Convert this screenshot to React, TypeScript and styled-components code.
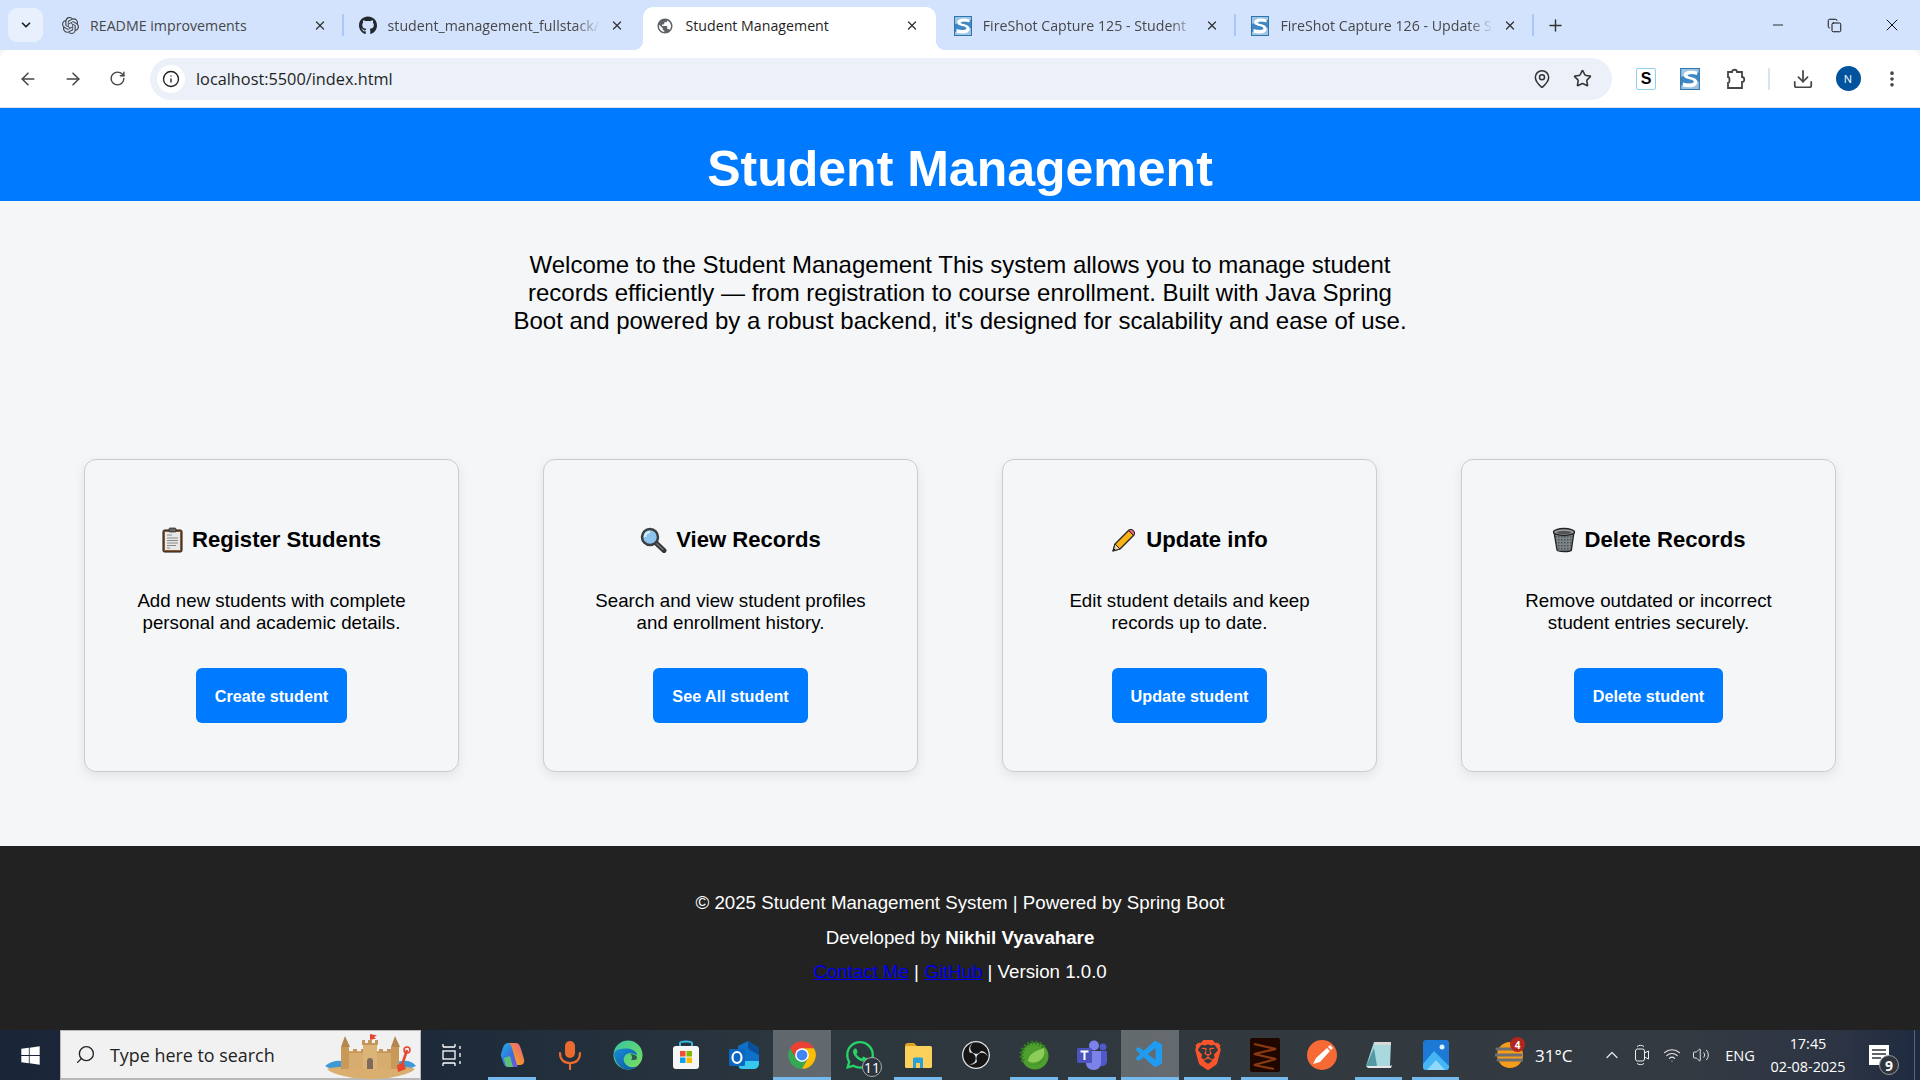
import React from "react";
import styled, { createGlobalStyle } from "styled-components";
import {
  ArrowLeft,
  ArrowRight,
  ChevronDown,
  ChevronUp,
  Copy,
  Download,
  EllipsisVertical,
  Info,
  MapPin,
  Minus,
  Plus,
  RotateCw,
  Search,
  Star,
  Volume2,
  Wifi,
  X,
} from "lucide-react";
import { FaGithub, FaWhatsapp, FaWindows } from "react-icons/fa";
import { MdPublic } from "react-icons/md";
import { SiBrave, SiObsstudio, SiOpenai } from "react-icons/si";
import { VscVscode } from "react-icons/vsc";

const GlobalStyle = createGlobalStyle`
  html, body {
    margin: 0;
    padding: 0;
    background: #f4f6f8;
    font-family: "Liberation Sans", Arial, sans-serif;
  }
  * { box-sizing: border-box; }
`;

const Screen = styled.div`
  width: 1920px;
  height: 1080px;
  display: flex;
  flex-direction: column;
  overflow: hidden;
`;

/* browser chrome */
const TabStrip = styled.div`
  height: 50px;
  flex: none;
  display: flex;
  background: #d3e3fd;
  padding-top: 7px;
  font-family: "Open Sans", sans-serif;
`;

const TabMenu = styled.div`
  width: 35px;
  height: 34px;
  margin: 1px 3px 0 8px;
  flex: none;
  border-radius: 9px;
  background: #e9f0fd;
  display: flex;
  align-items: center;
  justify-content: center;
  color: #1f1f1f;
`;

const Tab = styled.div<{ $active?: boolean }>`
  position: relative;
  flex: none;
  width: ${(p) => (p.$active ? "293px" : "297.6px")};
  margin: ${(p) => (p.$active ? "0 2.3px" : "0")};
  display: flex;
  align-items: center;
  height: 43px;
  padding: 0 17px 6px ${(p) => (p.$active ? "13px" : "15px")};
  background: ${(p) => (p.$active ? "#fff" : "transparent")};
  border-radius: 10px 10px 0 0;
  color: ${(p) => (p.$active ? "#1f1f1f" : "#474747")};
  ${(p) =>
    p.$active
      ? `
    &::before, &::after {
      content: "";
      position: absolute;
      bottom: 0;
      width: 10px;
      height: 10px;
    }
    &::before { left: -10px; background: radial-gradient(circle at 0 0, transparent 10px, #fff 10.5px); }
    &::after { right: -10px; background: radial-gradient(circle at 100% 0, transparent 10px, #fff 10.5px); }
  `
      : ""}
`;

const TabSeparator = styled.span`
  position: absolute;
  right: 0;
  top: 7px;
  width: 2px;
  height: 22px;
  background: #a8c7fa;
`;

const Favicon = styled.span`
  width: 18px;
  height: 18px;
  flex: none;
  display: flex;
  align-items: center;
  justify-content: center;
  color: #444;
  margin-right: 11px;
`;

const TabTitle = styled.span<{ $fade?: boolean }>`
  flex: 1;
  min-width: 0;
  font-size: 14.2px;
  white-space: nowrap;
  overflow: hidden;
  margin-right: ${(p) => (p.$fade ? "9px" : "0")};
  ${(p) =>
    p.$fade
      ? "mask-image: linear-gradient(90deg, #000 88%, transparent 100%);"
      : ""}
`;

const TabClose = styled.span`
  flex: none;
  width: 14px;
  display: flex;
  justify-content: center;
  color: #333;
`;

const NewTab = styled.div`
  width: 42px;
  height: 36px;
  display: flex;
  align-items: center;
  justify-content: center;
  color: #333;
  margin-left: 1px;
`;

const WindowControls = styled.div`
  margin-left: auto;
  display: flex;
  margin-top: -7px;
  color: #111;
`;

const WindowButton = styled.div`
  width: 57px;
  height: 50px;
  display: flex;
  align-items: center;
  justify-content: center;
`;

const Toolbar = styled.div`
  height: 58px;
  flex: none;
  background: #fff;
  border-radius: 10px 10px 0 0;
  border-bottom: 1px solid #e0e2e6;
  display: flex;
  align-items: center;
  padding: 0 0 0 5px;
`;

const NavButton = styled.div`
  width: 45px;
  display: flex;
  justify-content: center;
  color: #444746;
`;

const AddressBar = styled.div`
  flex: none;
  width: 1462px;
  height: 42px;
  margin-left: 10px;
  border-radius: 21px;
  background: #ebf0f9;
  display: flex;
  align-items: center;
  padding: 0 20px 0 7px;
  color: #1f1f1f;
`;

const InfoBadge = styled.div`
  width: 28px;
  height: 28px;
  border-radius: 50%;
  background: #fff;
  display: flex;
  align-items: center;
  justify-content: center;
  margin-right: 11px;
`;

const Url = styled.span`
  font-family: "Open Sans", sans-serif;
  font-size: 16.3px;
  flex: 1;
`;

const BarIcons = styled.div`
  display: flex;
  align-items: center;
  gap: 21px;
  color: #333;
`;

const ExtensionTray = styled.div`
  display: flex;
  align-items: center;
  margin-left: 21px;
  color: #444746;
`;

const TraySlot = styled.div<{ $w: number }>`
  width: ${(p) => p.$w}px;
  flex: none;
  display: flex;
  align-items: center;
  justify-content: center;
`;

const TrayDivider = styled.span`
  width: 2px;
  height: 22px;
  background: #dbe3f0;
  margin: 0 13px 0 17px;
`;

const TextExtension = styled.div`
  width: 20px;
  height: 22px;
  border: 1px solid #8fd0f5;
  border-radius: 2px;
  background: #fff;
  color: #000;
  font: 700 16px "Liberation Sans", sans-serif;
  display: flex;
  align-items: center;
  justify-content: center;
`;

const Avatar = styled.div`
  width: 25px;
  height: 25px;
  border-radius: 50%;
  background: #00539c;
  color: #fff;
  font: 11px "Open Sans", sans-serif;
  display: flex;
  align-items: center;
  justify-content: center;
`;

/* page */
const Header = styled.header`
  height: 93px;
  flex: none;
  background: #007bff;
  color: #fff;
  text-align: center;
  padding-top: 32px;
`;

const Title = styled.h1`
  margin: 0;
  font-size: 50px;
  line-height: 58px;
  font-weight: 700;
`;

const Main = styled.main`
  flex: 1;
  display: flex;
  flex-direction: column;
  align-items: center;
  background: #f4f6f8;
  padding-top: 50px;
`;

const Intro = styled.p`
  margin: 0;
  width: 900px;
  text-align: center;
  font-size: 24px;
  line-height: 28px;
  color: #000;
`;

const CardGrid = styled.section`
  display: grid;
  grid-template-columns: repeat(4, 375px);
  gap: 84px;
  margin-top: 124px;
`;

const Card = styled.article`
  height: 313px;
  background: #f4f6f8;
  border: 1px solid #ccc;
  border-radius: 12px;
  box-shadow: 0 4px 12px rgba(0, 0, 0, 0.08);
  display: flex;
  flex-direction: column;
  align-items: center;
  padding-top: 66px;
`;

const CardTitle = styled.h3`
  margin: 0;
  height: 28px;
  display: flex;
  align-items: center;
  gap: 9px;
  font-size: 22.1px;
  line-height: 28px;
  font-weight: 700;
  color: #000;
`;

const CardText = styled.p`
  margin: 36px 0 0;
  width: 290px;
  text-align: center;
  font-size: 18.72px;
  line-height: 22px;
  color: #000;
`;

const CardButton = styled.button`
  margin-top: 34px;
  height: 55px;
  padding: 1px 19px 0;
  border: none;
  border-radius: 6px;
  background: #007bff;
  color: #fff;
  font-family: "Liberation Sans", Arial, sans-serif;
  font-size: 16.2px;
  font-weight: 700;
`;

const Footer = styled.footer`
  height: 184px;
  flex: none;
  background: #222;
  color: #fff;
  text-align: center;
  padding-top: 40px;
  font-size: 18.72px;
  line-height: 34.5px;
`;

const FooterLine = styled.div``;

const FooterLink = styled.a`
  color: #0000ee;
  text-decoration: underline;
`;

/* taskbar */
const Taskbar = styled.div`
  height: 50px;
  flex: none;
  display: flex;
  color: #fff;
  background: linear-gradient(
    90deg,
    #1a2638 0,
    #1c2a3a 22%,
    #2c373e 42%,
    #31393e 65%,
    #343a42 88%,
    #2c3444 96%,
    #1d2a3f 100%
  );
`;

const StartButton = styled.div`
  width: 60px;
  flex: none;
  display: flex;
  align-items: center;
  justify-content: center;
`;

const SearchBox = styled.div`
  width: 361px;
  height: 50px;
  flex: none;
  display: flex;
  align-items: center;
  background: #f1f1f1;
  border: 1px solid #b8b8b8;
  border-bottom-width: 2px;
  padding-left: 14px;
  color: #222;
  font-family: "Open Sans", sans-serif;
  font-size: 17.9px;
  position: relative;
`;

const SearchText = styled.span`
  margin-left: 14px;
`;

const SearchArt = styled.span`
  position: absolute;
  right: 3px;
  top: 2px;
  display: flex;
`;

const TaskSlot = styled.div<{ $w?: number; $active?: boolean; $running?: boolean }>`
  position: relative;
  width: ${(p) => p.$w ?? 58}px;
  flex: none;
  display: flex;
  align-items: center;
  justify-content: center;
  background: ${(p) => (p.$active ? "rgba(255,255,255,0.25)" : "transparent")};
  ${(p) =>
    p.$running
      ? `
    &::after {
      content: "";
      position: absolute;
      bottom: 0;
      height: 3px;
      left: ${p.$active ? 0 : 5}px;
      right: ${p.$active ? 0 : 5}px;
      background: #76b9ed;
    }
  `
      : ""}
`;

const CountBadge = styled.span`
  position: absolute;
  right: 7px;
  bottom: 3px;
  width: 20px;
  height: 20px;
  border-radius: 50%;
  border: 1px solid #aaa;
  background: #2c353b;
  color: #fff;
  font: 14px "Open Sans", sans-serif;
  display: flex;
  align-items: center;
  justify-content: center;
`;

const SystemTray = styled.div`
  display: flex;
  align-items: center;
  margin-left: 31px;
  font-family: "Open Sans", sans-serif;
`;

const Weather = styled.span`
  position: relative;
  display: flex;
  margin-right: 12px;
`;

const WeatherBadge = styled.span`
  position: absolute;
  right: -2px;
  top: -3px;
  width: 15px;
  height: 15px;
  border-radius: 50%;
  background: #b3261e;
  font: 700 10px "Open Sans", sans-serif;
  display: flex;
  align-items: center;
  justify-content: center;
`;

const Temperature = styled.span`
  font-size: 17px;
  width: 62px;
`;

const TrayIcon = styled.span<{ $w: number }>`
  width: ${(p) => p.$w}px;
  display: flex;
  justify-content: center;
  color: #e6e6e6;
`;

const Lang = styled.span`
  font-size: 14.6px;
  width: 50px;
  text-align: center;
`;

const Clock = styled.div`
  width: 86px;
  text-align: center;
  font-size: 14.4px;
  line-height: 23px;
`;

const Notification = styled.div`
  position: relative;
  width: 36px;
  margin-left: 10px;
  display: flex;
  justify-content: center;
`;

const NotificationCount = styled.span`
  position: absolute;
  left: 18px;
  top: 10px;
  width: 20px;
  height: 20px;
  border-radius: 50%;
  border: 1px solid #999;
  background: #2f353d;
  font: 700 14px "Open Sans", sans-serif;
  display: flex;
  align-items: center;
  justify-content: center;
`;

const ShowDesktop = styled.span`
  width: 1px;
  height: 50px;
  margin-left: 17px;
  background: #5a6270;
`;

const FireShotIcon = ({ size = 18 }: { size?: number }) => (
  <svg width={size} height={size + 2} viewBox="0 0 18 20">
    <rect x="0.5" y="0.5" width="17" height="19" fill="#3f88c5" stroke="#2f74ad" />
    <path d="M1 1h16v3L1 8zM17 12v7H1v-3z" fill="#9cc4e4" />
    <path
      d="M15.500 3.500C11 2 3.500 2 3.200 6.500 3 10.500 12.500 9.500 12.500 12.500c0 2-5.500 2-10 .6v3.700c5.500 1.400 13.200 1.400 13.200-4.200 0-4.600-9-4-9-6 0-1.600 4.800-1.200 8.800-.2z"
      fill="#fff"
    />
  </svg>
);

const ClipboardEmoji = () => (
  <svg width="21" height="26" viewBox="0 0 21 26">
    <rect x="1" y="3" width="19" height="22" rx="1.500" fill="#8a5a34" stroke="#111" />
    <rect x="3" y="5" width="15" height="18" fill="#e8e8e8" />
    <rect x="7" y="1" width="7" height="4" rx="1" fill="#666" stroke="#222" strokeWidth=".7" />
    <path d="M5 8h5M5 11h11M5 13.500h11M5 16h11M5 18.500h9M5 21h3" stroke="#888" strokeWidth="1.200" />
  </svg>
);

const MagnifierEmoji = () => (
  <svg width="27" height="26" viewBox="0 0 27 26">
    <path d="M15 15l9 8.500" stroke="#333" strokeWidth="5" strokeLinecap="round" />
    <path d="M16 16l7 6.500" stroke="#777" strokeWidth="1.500" strokeLinecap="round" />
    <circle cx="10" cy="10" r="8" fill="#8cc4ee" stroke="#3a3f44" strokeWidth="2.500" />
    <path d="M5 10c0-3 2-5 5-5" stroke="#d8eefb" strokeWidth="2.500" fill="none" />
  </svg>
);

const PencilEmoji = () => (
  <svg width="26" height="26" viewBox="0 0 26 26">
    <path d="M2 24l2-7L18 3l5 5L9 22z" fill="#f9b314" stroke="#222" strokeWidth="1.300" strokeLinejoin="round" />
    <path d="M17.500 3.500a3 3 0 0 1 5 5z" fill="#e8607a" stroke="#222" strokeWidth="1" />
    <path d="M2 24l2-7 5 5z" fill="#e9d3b0" stroke="#222" strokeWidth="1" />
    <path d="M2 24l.8-3 2.200 2.200z" fill="#222" />
  </svg>
);

const TrashEmoji = () => (
  <svg width="24" height="26" viewBox="0 0 24 26">
    <defs>
      <pattern id="mesh" width="3" height="3" patternUnits="userSpaceOnUse">
        <rect width="3" height="3" fill="#7c8487" />
        <rect width="1.500" height="1.500" fill="#4e5558" />
      </pattern>
    </defs>
    <path d="M2 5l3 18c.3 2 14 2 14.400 0L22 5z" fill="url(#mesh)" stroke="#222" strokeWidth="1.300" />
    <ellipse cx="12" cy="5" rx="10.500" ry="3.500" fill="#9aa3a6" stroke="#222" strokeWidth="1.300" />
    <ellipse cx="12" cy="5.500" rx="7.500" ry="1.800" fill="#555" />
  </svg>
);

const CastleArt = () => (
  <svg width="92" height="47" viewBox="0 0 92 47">
    <path d="M0 33c8-6 14-6 20-4h52c8-2 14-2 19 4-8 4-18 5-24 4H24c-8 1-18 0-24-4z" fill="#3d9ad6" />
    <path d="M2 36c10-4 76-5 88 0-6 6-26 10-44 10S8 42 2 36z" fill="#d9ae6e" />
    <path d="M20 18h54v18H20z" fill="#d7ad6f" />
    <path d="M20 16h4v3h4v-3h4v3h4v-3h4v3h14v-3h4v3h4v-3h4v3h4v-3h4v4H20z" fill="#c4965b" />
    <path d="M16 14h8v22h-8zM66 14h8v22h-8z" fill="#c9995a" />
    <path d="M20 3l5 11h-9zM70 3l5 11h-9z" fill="#b5874e" />
    <path d="M38 10h14v26H38z" fill="#dcb478" />
    <path d="M37 7h3v3h3V7h4v3h3V7h3v5H37z" fill="#c4965b" />
    <path d="M42 36v-8c0-4 6-4 6 0v8z" fill="#7d6a5c" />
    <path d="M45 7V1l7 1.500-3 1.500 2 1.500z" fill="#e8432c" />
    <path d="M82 17l-5 15" stroke="#e8432c" strokeWidth="2.500" />
    <path d="M72 32l7-2 2 6-8 3z" fill="#e8432c" />
    <circle cx="82" cy="17" r="3" fill="none" stroke="#e8432c" strokeWidth="1.500" />
  </svg>
);

const TaskViewIcon = () => (
  <svg width="20" height="26" viewBox="0 0 20 26" fill="none" stroke="#fff" strokeWidth="1.300">
    <path d="M1 5h12M1 21h12M1 2v3M13 2v3M1 21v3M13 21v3" />
    <rect x="1" y="9" width="12" height="8" />
    <path d="M18 4v3M18 11v4M18 19v3" />
  </svg>
);

const CopilotIcon = () => (
  <svg width="28" height="28" viewBox="0 0 28 28">
    <defs>
      <linearGradient id="cpA" x1="0" y1="0" x2="1" y2="1">
        <stop offset="0" stopColor="#19b4e6" />
        <stop offset=".5" stopColor="#3b6fe0" />
        <stop offset="1" stopColor="#7a4fd8" />
      </linearGradient>
      <linearGradient id="cpB" x1="0" y1="1" x2="1" y2="0">
        <stop offset="0" stopColor="#f7c734" />
        <stop offset=".5" stopColor="#f08a3c" />
        <stop offset="1" stopColor="#e85aa0" />
      </linearGradient>
    </defs>
    <path d="M9 2h9c3 0 4 3 5 6l3 10c1 4-1 6-4 6h-4L12 8c-1-3-2-4-3-6z" fill="url(#cpB)" />
    <path d="M4 10c1-5 3-8 6-8 2 0 3 2 4 5l5 17c.5 2 1 2 3 2H10c-3 0-4-2-5-5L3 15c-.5-2 .5-3 1-5z" fill="url(#cpA)" />
    <path d="M6 17l6-2 3 11h-5c-2 0-3-2-4-9z" fill="#5fd069" opacity=".85" />
  </svg>
);

const MicIcon = () => (
  <svg width="24" height="30" viewBox="0 0 24 30" fill="none">
    <rect x="7" y="1" width="10" height="17" rx="5" fill="#ea6a2f" />
    <path d="M2 13c0 7 4 10 10 10s10-3 10-10M12 23v6" stroke="#ea6a2f" strokeWidth="2.200" strokeLinecap="round" />
  </svg>
);

const EdgeIcon = () => (
  <svg width="30" height="30" viewBox="0 0 30 30">
    <defs>
      <linearGradient id="edA" x1="0" y1="0" x2="1" y2="1">
        <stop offset="0" stopColor="#36c6a0" />
        <stop offset="1" stopColor="#7adf5f" />
      </linearGradient>
      <linearGradient id="edB" x1="0" y1="0" x2="1" y2="1">
        <stop offset="0" stopColor="#1b8ad6" />
        <stop offset="1" stopColor="#0c59a4" />
      </linearGradient>
    </defs>
    <circle cx="15" cy="15" r="14.500" fill="url(#edA)" />
    <path d="M1 14C2 24 9 30 16 29.500c3 0 6-1 8-3-5 2-11 0-13-5-1-4 1-7 4-8 4-1 8 .5 9 2 .5-3-4-7-10-7S2 9 1 14z" fill="url(#edB)" />
    <path d="M17 14c3 0 6 1 7 3 .5 2-1 3-3 3h-3c2-2 1-5-1-6z" fill="#1c2a3a" opacity=".7" />
  </svg>
);

const StoreIcon = () => (
  <svg width="28" height="30" viewBox="0 0 28 30">
    <path d="M8 6V3c0-2 12-2 12 0v3" fill="none" stroke="#34b6e8" strokeWidth="2" />
    <rect x="1" y="6" width="26" height="23" rx="3" fill="#f6f6f6" />
    <rect x="8" y="11" width="5.500" height="5.500" fill="#f05033" />
    <rect x="14.500" y="11" width="5.500" height="5.500" fill="#7fba00" />
    <rect x="8" y="17.500" width="5.500" height="5.500" fill="#0a9fe8" />
    <rect x="14.500" y="17.500" width="5.500" height="5.500" fill="#fdb900" />
  </svg>
);

const OutlookIcon = () => (
  <svg width="32" height="30" viewBox="0 0 32 30">
    <path d="M10 6l10-5 11 7v14l-20 7z" fill="#0f70c8" />
    <path d="M20 1l11 7v7l-11-6z" fill="#0a4f99" />
    <path d="M10 21h21v3c0 3-3 5-5 5H14c-2 0-4-3-4-5z" fill="#37c8ee" />
    <rect x="1" y="9" width="16" height="17" rx="1.500" fill="#0b66c0" />
    <ellipse cx="9" cy="17.500" rx="4.500" ry="5.500" fill="none" stroke="#fff" strokeWidth="2.200" />
  </svg>
);

const ChromeIcon = () => (
  <svg width="30" height="30" viewBox="0 0 24 24">
    <path d="M2.470 6.500A11 11 0 0 1 21.530 6.500H12L7.240 14.750z" fill="#ea4335" />
    <path d="M2.470 6.500A11 11 0 0 0 12 23l4.760-8.250H7.240z" fill="#34a853" />
    <path d="M21.530 6.500A11 11 0 0 1 12 23l4.760-8.250L12 6.500z" fill="#fbbc04" />
    <circle cx="12" cy="12" r="5.500" fill="#fff" />
    <circle cx="12" cy="12" r="4.300" fill="#4285f4" />
  </svg>
);

const FolderIcon = () => (
  <svg width="28" height="27" viewBox="0 0 28 27">
    <path d="M1 4c0-2 1-3 3-3h6l3 3h6v6H1z" fill="#d9a520" />
    <rect x="1" y="4" width="27" height="22" rx="1.500" fill="#fbd15c" />
    <path d="M9 26V17c0-1 1-1.500 1.500-1.500h7c1 0 1.500.5 1.500 1.500v9h-3v-5h-4v5z" fill="#2b9fd8" />
  </svg>
);

const ObsBadge = styled.span`
  display: flex;
  border-radius: 50%;
  background: #151515;
`;

const ObsIcon = () => (
  <ObsBadge>
    <SiObsstudio size={28} color="#e4e4e4" />
  </ObsBadge>
);

const SpringIcon = () => (
  <svg width="30" height="30" viewBox="0 0 30 30">
    <circle cx="16" cy="16" r="13.500" fill="#4f9f2f" />
    <circle
      cx="15"
      cy="15"
      r="12.500"
      fill="none"
      stroke="#2f7d1f"
      strokeWidth="4"
      pathLength="100"
      strokeDasharray="2.500 2.500 2.500 2.500 2.500 2.500 2.500 2.500 2.500 2.500 2.500 2.500 2.500 2.500 2.500 2.500 2.500 2.500 2.500 2.500 0 100"
      transform="rotate(150 15 15)"
    />
    <path d="M25 8c2 8-3 14-10 14.500-3 .2-5-.5-6-2C10 14 16 11 25 8z" fill="#8ccc58" />
    <path d="M8 24c4 2 10 1 14-2 2-2 3-3 4-5-2 5-7 8-12 8-2 0-4 0-6-1z" fill="#1f6b1a" />
  </svg>
);

const TeamsIcon = () => (
  <svg width="32" height="30" viewBox="0 0 32 30">
    <circle cx="18" cy="5.500" r="5" fill="#7b83eb" />
    <circle cx="27" cy="7" r="3.500" fill="#5059c9" />
    <path d="M22 11h9v10c0 3-2 5-5 5h-4z" fill="#5059c9" />
    <path d="M10 11h15v12c0 4-3 7-7 7-5 0-8-3-8-7z" fill="#7b83eb" />
    <rect x="1" y="8" width="15" height="15" rx="1.500" fill="#4b53bc" />
    <path d="M4.500 11.500h8M8.500 11.500v8.500" stroke="#fff" strokeWidth="2" />
  </svg>
);

const CoilIcon = () => (
  <svg width="30" height="34" viewBox="0 0 30 34">
    <rect width="30" height="34" rx="2" fill="#1f0700" />
    <path d="M4 6l22 5L4 16l22 5L4 27l20 4" fill="none" stroke="#8a3a10" strokeWidth="2.200" />
  </svg>
);

const PostmanIcon = () => (
  <svg width="30" height="30" viewBox="0 0 30 30">
    <circle cx="15" cy="15" r="15" fill="#f76935" />
    <path d="M6 24l3-6L20 8l3 3-10 11z" fill="#fff" />
    <path d="M21 7l2-2 3 3-2 2z" fill="#fff" />
  </svg>
);

const NotepadIcon = () => (
  <svg width="28" height="30" viewBox="0 0 28 30">
    <path d="M9 2h17l-1 24H1z" fill="#a9d8df" />
    <path d="M10 2h16v3H9z" fill="#d8d8d8" />
    <path d="M1 26h24l2-1-1 3H3z" fill="#e8e8e8" />
    <path d="M1 26L9 8l3 18z" fill="#2f7d89" opacity=".7" />
  </svg>
);

const PhotosIcon = () => (
  <svg width="26" height="30" viewBox="0 0 26 30">
    <rect width="26" height="30" rx="3" fill="#1c7ad6" />
    <circle cx="19" cy="7" r="2.500" fill="#dff1ff" />
    <path d="M0 24L11 11l15 15v1a3 3 0 0 1-3 3H3a3 3 0 0 1-3-3z" fill="#46b5f3" />
    <path d="M4 30l9-10 9 10z" fill="#8ed8fb" />
  </svg>
);

const WeatherIcon = () => (
  <svg width="28" height="30" viewBox="0 0 28 30">
    <circle cx="15" cy="15" r="13" fill="#f59c1a" />
    <path d="M2 9h18M0 15h26M3 20h24" stroke="#6c6f73" strokeWidth="3" strokeLinecap="round" />
  </svg>
);

const MeetIcon = () => (
  <svg width="14" height="22" viewBox="0 0 14 22" fill="none" stroke="#eee" strokeWidth="1">
    <rect x=".5" y="5" width="9" height="12" rx="2" />
    <path d="M9.500 9l4-2v8l-4-2M2 2.500c2-1.500 5-1.500 7 0M2 19.500c2 1.500 5 1.500 7 0" />
  </svg>
);

const NoteIcon = () => (
  <svg width="20" height="20" viewBox="0 0 20 20">
    <path d="M0 0h20v20H0z" fill="#fff" />
    <path d="M3 5h14M3 9h14M3 13h9" stroke="#2f353d" strokeWidth="1.500" />
  </svg>
);

const tabs = [
  { title: "README improvements", icon: <SiOpenai size={17} />, sep: true },
  { title: "student_management_fullstack/", icon: <FaGithub size={21} color="#24292f" />, fade: true },
  { title: "Student Management", icon: <MdPublic size={20} color="#5f6368" />, active: true },
  { title: "FireShot Capture 125 - Student", icon: <FireShotIcon />, fade: true, sep: true },
  { title: "FireShot Capture 126 - Update S", icon: <FireShotIcon />, fade: true, sep: true },
];

const cards = [
  {
    icon: <ClipboardEmoji />,
    title: "Register Students",
    text: "Add new students with complete personal and academic details.",
    action: "Create student",
  },
  {
    icon: <MagnifierEmoji />,
    title: "View Records",
    text: "Search and view student profiles and enrollment history.",
    action: "See All student",
  },
  {
    icon: <PencilEmoji />,
    title: "Update info",
    text: "Edit student details and keep records up to date.",
    action: "Update student",
  },
  {
    icon: <TrashEmoji />,
    title: "Delete Records",
    text: "Remove outdated or incorrect student entries securely.",
    action: "Delete student",
  },
];

const taskItems = [
  { icon: <CopilotIcon />, running: true },
  { icon: <MicIcon /> },
  { icon: <EdgeIcon /> },
  { icon: <StoreIcon /> },
  { icon: <OutlookIcon /> },
  { icon: <ChromeIcon />, running: true, active: true },
  { icon: <FaWhatsapp size={32} color="#25d366" />, badge: "11" },
  { icon: <FolderIcon />, running: true },
  { icon: <ObsIcon /> },
  { icon: <SpringIcon />, running: true },
  { icon: <TeamsIcon />, running: true },
  { icon: <VscVscode size={32} color="#1f9cf0" />, running: true, active: true },
  { icon: <SiBrave size={30} color="#fb542b" />, running: true, w: 57 },
  { icon: <CoilIcon />, running: true, w: 57 },
  { icon: <PostmanIcon />, w: 57 },
  { icon: <NotepadIcon />, running: true, w: 57 },
  { icon: <PhotosIcon />, running: true, w: 57 },
];

export default function App() {
  return (
    <Screen>
      <GlobalStyle />
      <TabStrip>
        <TabMenu>
          <ChevronDown size={14} strokeWidth={3} />
        </TabMenu>
        {tabs.map((tab) => (
          <Tab key={tab.title} $active={tab.active}>
            <Favicon>{tab.icon}</Favicon>
            <TabTitle $fade={tab.fade}>{tab.title}</TabTitle>
            <TabClose>
              <X size={15} strokeWidth={2.2} />
            </TabClose>
            {tab.sep && <TabSeparator />}
          </Tab>
        ))}
        <NewTab>
          <Plus size={19} strokeWidth={1.8} />
        </NewTab>
        <WindowControls>
          <WindowButton>
            <Minus size={16} strokeWidth={1.3} />
          </WindowButton>
          <WindowButton>
            <Copy size={15} strokeWidth={1.6} />
          </WindowButton>
          <WindowButton>
            <X size={20} strokeWidth={1.2} />
          </WindowButton>
        </WindowControls>
      </TabStrip>

      <Toolbar>
        <NavButton>
          <ArrowLeft size={20} strokeWidth={1.8} />
        </NavButton>
        <NavButton>
          <ArrowRight size={20} strokeWidth={1.8} />
        </NavButton>
        <NavButton>
          <RotateCw size={17} strokeWidth={2} />
        </NavButton>
        <AddressBar>
          <InfoBadge>
            <Info size={18} strokeWidth={1.8} />
          </InfoBadge>
          <Url>localhost:5500/index.html</Url>
          <BarIcons>
            <MapPin size={20} strokeWidth={1.8} />
            <Star size={19} strokeWidth={2} />
          </BarIcons>
        </AddressBar>
        <ExtensionTray>
          <TraySlot $w={26}>
            <TextExtension>S</TextExtension>
          </TraySlot>
          <TraySlot $w={62}>
            <FireShotIcon size={20} />
          </TraySlot>
          <TraySlot $w={30}>
            <svg width="20" height="22" viewBox="0 0 20 22" fill="none" stroke="#444746" strokeWidth="1.800">
              <path d="M2 4h4c0-3 5-3 5 0h5v5c3 0 3 5 0 5v6H2v-5c2 0 2-6 0-6z" />
            </svg>
          </TraySlot>
          <TrayDivider />
          <TraySlot $w={40}>
            <Download size={22} strokeWidth={1.9} />
          </TraySlot>
          <TraySlot $w={50}>
            <Avatar>N</Avatar>
          </TraySlot>
          <TraySlot $w={38}>
            <EllipsisVertical size={20} strokeWidth={2.4} />
          </TraySlot>
        </ExtensionTray>
      </Toolbar>

      <Header>
        <Title>Student Management</Title>
      </Header>

      <Main>
        <Intro>
          Welcome to the Student Management This system allows you to manage student records
          efficiently — from registration to course enrollment. Built with Java Spring Boot and
          powered by a robust backend, it's designed for scalability and ease of use.
        </Intro>
        <CardGrid>
          {cards.map((card) => (
            <Card key={card.title}>
              <CardTitle>
                {card.icon}
                {card.title}
              </CardTitle>
              <CardText>{card.text}</CardText>
              <CardButton>{card.action}</CardButton>
            </Card>
          ))}
        </CardGrid>
      </Main>

      <Footer>
        <FooterLine>© 2025 Student Management System | Powered by Spring Boot</FooterLine>
        <FooterLine>
          Developed by <strong>Nikhil Vyavahare</strong>
        </FooterLine>
        <FooterLine>
          <FooterLink href="#">Contact Me</FooterLink> | <FooterLink href="#">GitHub</FooterLink> | Version 1.0.0
        </FooterLine>
      </Footer>

      <Taskbar>
        <StartButton>
          <FaWindows size={21} />
        </StartButton>
        <SearchBox>
          <Search size={21} strokeWidth={1.5} style={{ transform: "scaleX(-1)" }} />
          <SearchText>Type here to search</SearchText>
          <SearchArt>
            <CastleArt />
          </SearchArt>
        </SearchBox>
        <TaskSlot $w={62}>
          <TaskViewIcon />
        </TaskSlot>
        {taskItems.map((item, i) => (
          <TaskSlot key={i} $w={item.w} $active={item.active} $running={item.running}>
            {item.icon}
            {item.badge && <CountBadge>{item.badge}</CountBadge>}
          </TaskSlot>
        ))}
        <SystemTray>
          <Weather>
            <WeatherIcon />
            <WeatherBadge>4</WeatherBadge>
          </Weather>
          <Temperature>31°C</Temperature>
          <TrayIcon $w={30}>
            <ChevronUp size={20} strokeWidth={1.5} />
          </TrayIcon>
          <TrayIcon $w={30}>
            <MeetIcon />
          </TrayIcon>
          <TrayIcon $w={30}>
            <Wifi size={18} strokeWidth={1.5} />
          </TrayIcon>
          <TrayIcon $w={28}>
            <Volume2 size={18} strokeWidth={1.3} />
          </TrayIcon>
          <Lang>ENG</Lang>
          <Clock>
            17:45
            <br />
            02-08-2025
          </Clock>
          <Notification>
            <NoteIcon />
            <NotificationCount>9</NotificationCount>
          </Notification>
          <ShowDesktop />
        </SystemTray>
      </Taskbar>
    </Screen>
  );
}
